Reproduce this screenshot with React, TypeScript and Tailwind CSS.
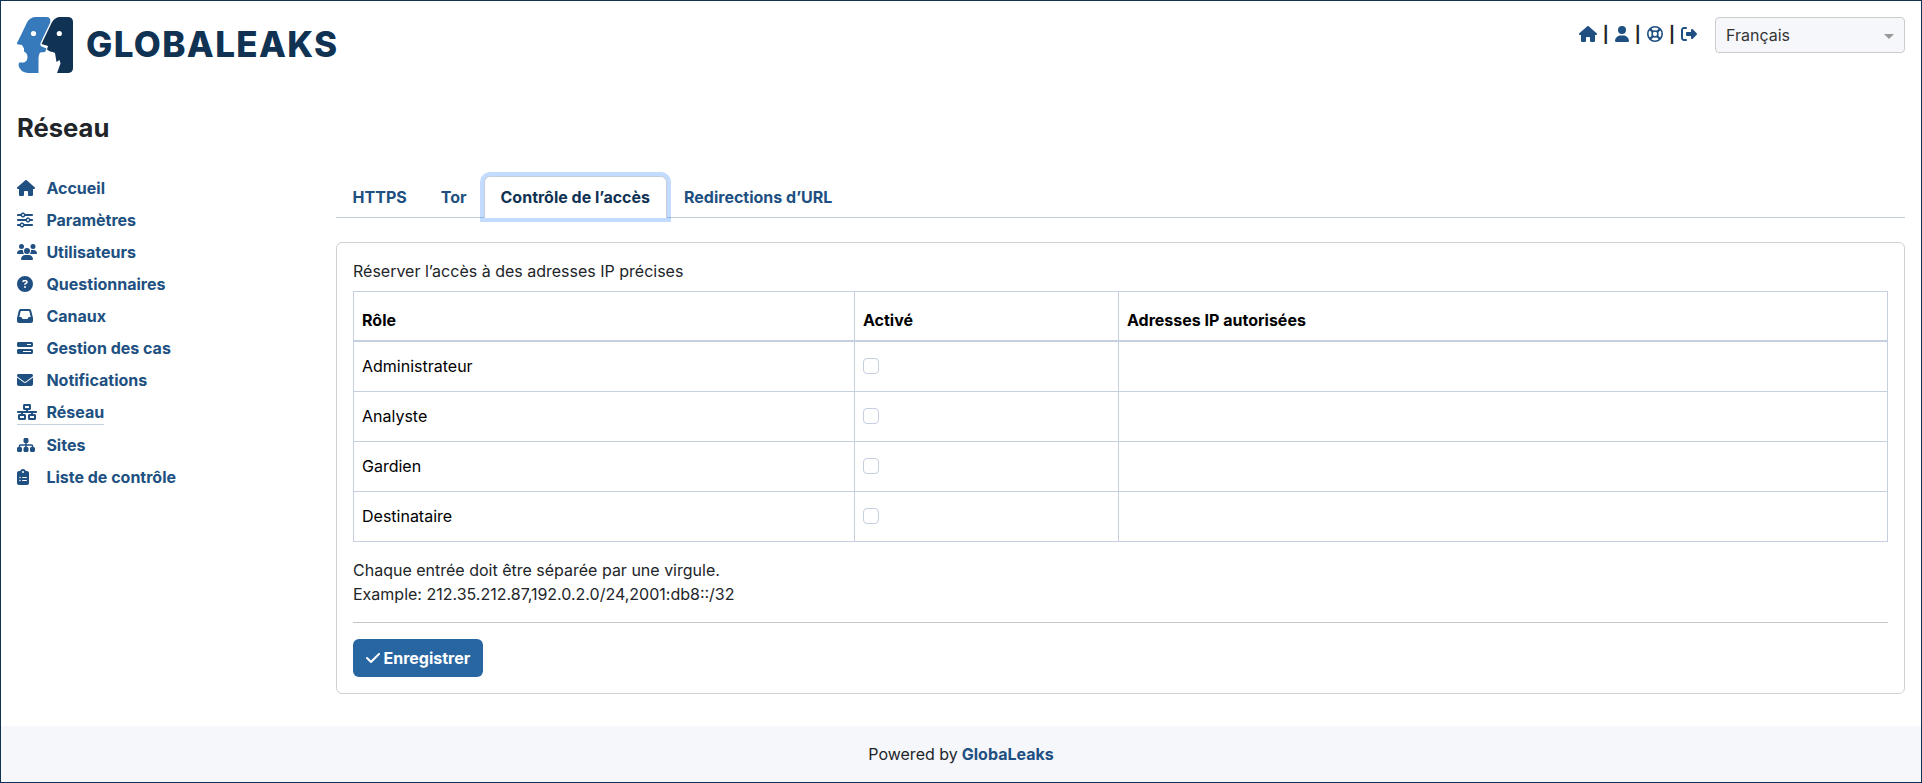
import {
  FaBarsProgress,
  FaCheck,
  FaCircleQuestion,
  FaClipboardList,
  FaEnvelope,
  FaHouse,
  FaInbox,
  FaNetworkWired,
  FaRightFromBracket,
  FaSitemap,
  FaSliders,
  FaUser,
  FaUsers,
} from "react-icons/fa6";
import type { IconType } from "react-icons";

type MenuItem = { label: string; icon: IconType; size: string; active?: boolean };

const menu: MenuItem[] = [
  { label: "Accueil", icon: FaHouse, size: "h-4 w-[18px]" },
  { label: "Paramètres", icon: FaSliders, size: "h-4 w-4" },
  { label: "Utilisateurs", icon: FaUsers, size: "h-4 w-5" },
  { label: "Questionnaires", icon: FaCircleQuestion, size: "h-4 w-4" },
  { label: "Canaux", icon: FaInbox, size: "h-4 w-4" },
  { label: "Gestion des cas", icon: FaBarsProgress, size: "h-4 w-4" },
  { label: "Notifications", icon: FaEnvelope, size: "h-4 w-4" },
  { label: "Réseau", icon: FaNetworkWired, size: "h-4 w-5", active: true },
  { label: "Sites", icon: FaSitemap, size: "h-4 w-[18px]" },
  { label: "Liste de contrôle", icon: FaClipboardList, size: "h-4 w-3" },
];

const roles = ["Administrateur", "Analyste", "Gardien", "Destinataire"];

function Logo() {
  return (
    <div className="flex h-14 items-center">
      <svg viewBox="0 0 56 56" className="h-14 w-14 shrink-0">
        <path
          fill="#377abc"
          d="M18 0H30Q34.500 .5 33 6L23.500 26Q22.500 29 26 30L29.500 31.500L28 35L23 35.500Q21.500 38 21.500 41V56H11Q3 55 1.500 48.500L2 45.500H7Q10.500 44 10.500 40Q10.500 36 7 34.500V31.500L5 28L0 27.300V26L4.500 17L10 5.500Q12.500 .7 18 0Z"
        />
        <path
          fill="#103253"
          d="M42.500 0H51.500Q56 .5 56 5V51Q56 55.500 51.500 56H40L43.500 46.500L42.500 43L39.500 45L38 36Q36 34.500 33 34.500L30 32.500L31 29L24.500 27L34.500 6Q37.500 .5 42.500 0Z"
        />
        <circle cx="16.5" cy="16.500" r="2.600" fill="#fff" />
        <circle cx="42.300" cy="16.500" r="2.600" fill="#fff" />
      </svg>
      <span className="mb-px ml-[13px] text-[35px] leading-none font-extrabold tracking-[1.350px] text-[#103253]">
        GLOBALEAKS
      </span>
    </div>
  );
}

function LifeRing() {
  return (
    <svg viewBox="0 0 16 16" className="h-4 w-4" fill="none" stroke="currentColor">
      <circle cx="8" cy="8" r="7.200" strokeWidth="1.600" />
      <circle cx="8" cy="8" r="2.900" strokeWidth="1.500" />
      <path d="M3 3l3 3M13 3l-3 3M3 13l3-3M13 13l-3-3" strokeWidth="2.400" />
    </svg>
  );
}

function Divider() {
  return <span className="text-base leading-6 font-bold text-[#212529]">|</span>;
}

function Header() {
  return (
    <header className="flex items-start justify-between">
      <Logo />
      <div className="flex items-start">
        <div className="mt-[5px] mr-[18px] flex items-center gap-[6.100px] text-[#205081]">
          <FaHouse className="h-4 w-[18px]" />
          <Divider />
          <FaUser className="h-4 w-[14px]" />
          <Divider />
          <LifeRing />
          <Divider />
          <FaRightFromBracket className="h-4 w-4" />
        </div>
        <button className="flex h-9 w-[190px] items-center justify-between rounded border border-[#ccc] bg-[#f5f7fb] px-2.5 text-[#333]">
          <span>Français</span>
          <span className="mt-0.5 border-x-[5px] border-t-[5px] border-x-transparent border-t-[#999]" />
        </button>
      </div>
    </header>
  );
}

function Sidebar() {
  return (
    <nav className="flex w-[319px] shrink-0 flex-col items-start pt-0.5 font-bold text-[#205081]">
      {menu.map(({ label, icon: Icon, size, active }) => (
        <a
          key={label}
          className={
            active ? "mb-1 flex h-[29px] items-start border-b border-[#c6cfe0] pt-1" : "flex h-8 items-start pt-1"
          }
        >
          <span className="mt-1 flex w-[29.400px]">
            <Icon className={size} />
          </span>
          <span className="leading-6">{label}</span>
        </a>
      ))}
    </nav>
  );
}

function Tabs() {
  return (
    <div className="flex h-[42px] border-b border-[#c3cddb] font-bold text-[#205081]">
      <a className="pr-[17px] pl-[16.600px] py-[9px]">HTTPS</a>
      <a className="px-[17px] py-[9px]">Tor</a>
      <a className="relative h-[42px] rounded-t-md border border-b-0 border-[#c3cddb] bg-white px-4 py-2 text-[#103253] shadow-[0_0_0_4px_rgba(13,110,253,0.25)]">
        Contrôle de l’accès
      </a>
      <a className="px-[17px] py-[9px]">Redirections d’URL</a>
    </div>
  );
}

function AccessTable() {
  return (
    <table className="w-full table-fixed border-collapse border border-[#c6cfe0] text-left text-black">
      <colgroup>
        <col className="w-[501px]" />
        <col className="w-[264px]" />
        <col />
      </colgroup>
      <thead>
        <tr className="h-[49px] border-b-2 border-[#c6cfe0]">
          <th className="border-r border-[#c6cfe0] px-2 pt-2 font-bold">Rôle</th>
          <th className="border-r border-[#c6cfe0] px-2 pt-2 font-bold">Activé</th>
          <th className="px-2 pt-2 font-bold">Adresses IP autorisées</th>
        </tr>
      </thead>
      <tbody>
        {roles.map((role) => (
          <tr key={role} className="h-[50px] border-b border-[#c6cfe0] first:h-[51px]">
            <td className="border-r border-[#c6cfe0] px-2 pb-px">{role}</td>
            <td className="border-r border-[#c6cfe0] px-2 pb-px">
              <input
                type="checkbox"
                className="block h-4 w-4 appearance-none rounded border border-[#c6cfe0] bg-white"
              />
            </td>
            <td className="px-2" />
          </tr>
        ))}
      </tbody>
    </table>
  );
}

export default function App() {
  return (
    <div className="flex h-[783px] w-full flex-col border border-[#103253] bg-white font-['Inter',sans-serif] text-base text-[#212529]">
      <div className="flex-1 px-4 pt-4">
        <Header />
        <h1 className="mt-10 text-[25.600px] leading-[30px] font-bold">Réseau</h1>
        <div className="mt-[27px] flex">
          <Sidebar />
          <main className="mt-[6px] min-w-0 flex-1">
            <Tabs />
            <section className="mt-6 h-[452px] rounded-md border border-[#cfd1d4] p-4">
              <p className="mb-2 leading-6">Réserver l’accès à des adresses IP précises</p>
              <AccessTable />
              <p className="mt-4 leading-6">
                Chaque entrée doit être séparée par une virgule.
                <br />
                Example: 212.35.212.87,192.0.2.0/24,2001:db8::/32
              </p>
              <hr className="my-4 border-[#c4c6c8]" />
              <button className="flex h-[38px] w-[130px] items-center gap-1 rounded-md bg-[#2866a2] pl-[12.500px] font-bold text-white">
                <FaCheck className="h-4 w-[14px]" />
                Enregistrer
              </button>
            </section>
          </main>
        </div>
      </div>
      <footer className="flex h-14 items-center justify-center gap-1 bg-[#f5f7fb]">
        <span>Powered by</span>
        <a className="font-bold text-[#205081]">GlobaLeaks</a>
      </footer>
    </div>
  );
}
